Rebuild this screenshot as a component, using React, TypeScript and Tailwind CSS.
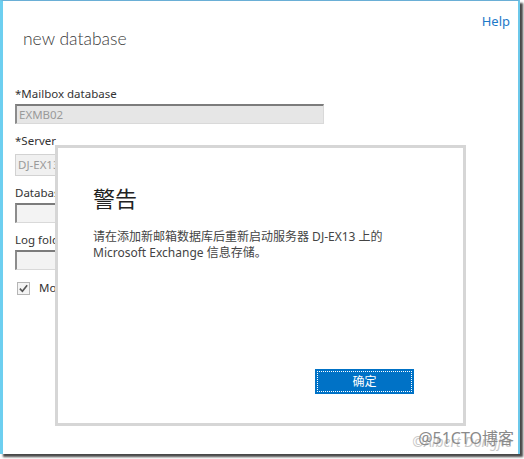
const fields = [
  { label: "*Mailbox database", value: "EXMB02", kind: "readonly" },
  { label: "*Server", value: "DJ-EX13", kind: "disabled" },
  { label: "Database file path:", value: "", kind: "empty" },
  { label: "Log folder path:", value: "", kind: "empty" },
];

function Field({ label, value, kind, first }: { label: string; value: string; kind: string; first: boolean }) {
  const box =
    kind === "disabled"
      ? "mt-[5px] h-[22px] border border-[#d2d2d2] bg-[#f0f0f0]"
      : kind === "readonly"
        ? "mt-[2px] h-[20px] border-t-2 border-l-2 border-r border-b border-t-[#7c7c7c] border-l-[#8c8c8c] border-r-[#d9d9d9] border-b-[#d9d9d9] bg-[#e6e6e6]"
        : "mt-[2px] h-[20px] border-t-2 border-l-2 border-r border-b border-t-[#7c7c7c] border-l-[#8c8c8c] border-r-[#d9d9d9] border-b-[#d9d9d9] bg-[#f3f3f3]";
  return (
    <div className={first ? "mt-[35px]" : "mt-[9px]"}>
      <div className="text-[11.5px] leading-4 text-[#333]">{label}</div>
      <div className={`flex w-[309px] items-center pl-[2px] text-[11.5px] text-[#9a9a9a] ${box}`}>{value}</div>
    </div>
  );
}

export default function App() {
  return (
    <div className="h-[459px] w-[524px] bg-white font-['Noto_Sans','Noto_Sans_CJK_SC',sans-serif]">
      <div className="relative h-[454px] w-[520px] border-t border-l-[3px] border-r-2 border-t-[#6aafd6] border-l-[#6dcff0] border-r-[#6cc8ea] bg-white shadow-[3px_3px_2px_rgba(40,40,40,0.85)]">
        <div className="flex justify-between pl-5 pr-[8px]">
          <h1 className="mt-[26px] font-['Lato','Noto_Sans',sans-serif] text-[17.5px] font-light leading-6 text-[#3a3a3a]">new database</h1>
          <a className="mt-[12px] text-[13px] leading-4 text-[#1e79c8]">Help</a>
        </div>

        <div className="pl-3">
          {fields.map((f, i) => (
            <Field key={f.label} {...f} first={i === 0} />
          ))}
          <div className="mt-[10px] flex items-center gap-[9px] pl-[2px] text-[11.5px] leading-4 text-[#333]">
            <span className="flex h-[13px] w-[13px] items-center justify-center border border-[#b5b5b5] bg-[#f4f4f4]">
              <svg viewBox="0 0 12 12" className="h-[11px] w-[11px]">
                <path d="M2 6.2 L4.8 9 L10 2.5" fill="none" stroke="#555" strokeWidth="1.8" />
              </svg>
            </span>
            Mount this database
          </div>
        </div>

        {/* warning dialog */}
        <div className="absolute left-[52px] top-[144px] flex h-[281px] w-[411px] flex-col border-[3px] border-[#d6d6d6] bg-white">
          <div className="pl-[35px] pt-[36px]">
            <div className="text-[22px] leading-[28px] text-[#222]">警告</div>
            <p className="mt-[17px] text-[12px] leading-4 text-[#444]">
              请在添加新邮箱数据库后重新启动服务器 DJ-EX13 上的
              <br />
              Microsoft Exchange 信息存储。
            </p>
          </div>
          <div className="mt-auto flex justify-end pb-[29px] pr-[49px]">
            <button className="h-[25px] w-[99px] bg-[#0072c6] p-[2px]">
              <span className="flex h-full w-full items-center justify-center border border-dotted border-white text-[12px] text-white">
                确定
              </span>
            </button>
          </div>
        </div>

        <div className="absolute bottom-[1px] right-[4px] h-[22px] w-[100px]">
          <span className="absolute bottom-[1px] right-[2px] whitespace-nowrap text-[14px] italic text-[#c8c8c8]">©Albert Dongjie</span>
          <span className="absolute bottom-[5px] right-0 whitespace-nowrap text-[16px] leading-5 text-[#8a8a8a]">@51CTO博客</span>
        </div>
      </div>
    </div>
  );
}
